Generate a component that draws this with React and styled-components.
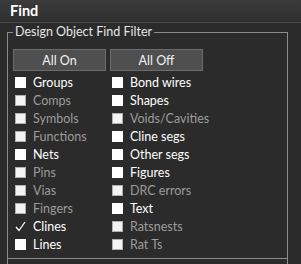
import React from "react";
import styled, { createGlobalStyle } from "styled-components";

const Global = createGlobalStyle`
  html, body { margin: 0; padding: 0; background: #2b2b2b; }
  body { font-family: Lato, "Noto Sans", sans-serif; font-size: 12px; }
`;

const Panel = styled.div`
  width: 301px;
  height: 264px;
  overflow: hidden;
  background: #2b2b2b;
`;

const Header = styled.div`
  height: 23px;
  box-sizing: border-box;
  border-bottom: 1px solid #4a4a4a;
  background: linear-gradient(#3b3b3b, #2f2f2f);
  color: #ffffff;
  font-weight: 700;
  font-size: 14.5px;
  line-height: 22px;
  padding-left: 10px;
`;

const Body = styled.div`
  padding: 1px 0 0 7px;
`;

const Group = styled.fieldset`
  margin: 0;
  width: 281px;
  box-sizing: border-box;
  border: 1px solid #8c8c8c;
  border-bottom: none;
  padding: 9px 5px 0 5px;
  height: 300px;
`;

const Legend = styled.legend`
  padding: 0 2px;
  color: #e6e6e6;
  font-size: 12.5px;
  line-height: 16px;
`;

const ButtonRow = styled.div`
  display: grid;
  grid-template-columns: 93px 93px;
  column-gap: 4px;
`;

const Button = styled.button`
  height: 22px;
  box-sizing: border-box;
  background: #4f4f4f;
  border: 1px solid #6c6c6c;
  color: #f2f2f2;
  font-family: inherit;
  font-size: 12.5px;
  padding: 0;
`;

const Grid = styled.div`
  display: grid;
  grid-template-columns: 97px 97px;
  grid-auto-flow: column;
  grid-template-rows: repeat(10, 18px);
  margin-top: 2px;
`;

const Item = styled.div`
  display: flex;
  align-items: center;
  padding-left: 2px;
  gap: 7px;
  font-size: 12.5px;
  color: ${(p) => (p.$disabled ? "#9c9c9c" : "#ffffff")};
  white-space: nowrap;
`;

const Box = styled.span`
  width: 11px;
  height: 11px;
  box-sizing: border-box;
  flex: none;
  background: ${(p) => (p.$checked ? "transparent" : p.$disabled ? "#f3f3f3" : "#ffffff")};
  border: ${(p) => (p.$disabled && !p.$checked ? "1px solid #b0b0b0" : "none")};
  display: flex;
  align-items: center;
  justify-content: center;
`;

const Separator = styled.div`
  height: 1px;
  background: #8c8c8c;
  margin: 5px -5px 0 -5px;
`;

const left = [
  ["Groups", false],
  ["Comps", true],
  ["Symbols", true],
  ["Functions", true],
  ["Nets", false],
  ["Pins", true],
  ["Vias", true],
  ["Fingers", true],
  ["Clines", false, true],
  ["Lines", false],
];
const right = [
  ["Bond wires", false],
  ["Shapes", false],
  ["Voids/Cavities", true],
  ["Cline segs", false],
  ["Other segs", false],
  ["Figures", false],
  ["DRC errors", true],
  ["Text", false],
  ["Ratsnests", true],
  ["Rat Ts", true],
];

function Check({ label, disabled, checked }) {
  return (
    <Item $disabled={disabled}>
      <Box $disabled={disabled} $checked={checked}>
        {checked && (
          <svg width="11" height="11" viewBox="0 0 11 11">
            <polyline points="1,6 4,9.5 10,1" fill="none" stroke="#ffffff" strokeWidth="1.3" />
          </svg>
        )}
      </Box>
      {label}
    </Item>
  );
}

export default function App() {
  return (
    <>
      <Global />
      <Panel>
        <Header>Find</Header>
        <Body>
          <Group>
            <Legend>Design Object Find Filter</Legend>
            <ButtonRow>
              <Button>All On</Button>
              <Button>All Off</Button>
            </ButtonRow>
            <Grid>
              {left.concat(right).map(([l, d, c]) => (
                <Check key={l} label={l} disabled={d} checked={c} />
              ))}
            </Grid>
            <Separator />
          </Group>
        </Body>
      </Panel>
    </>
  );
}
